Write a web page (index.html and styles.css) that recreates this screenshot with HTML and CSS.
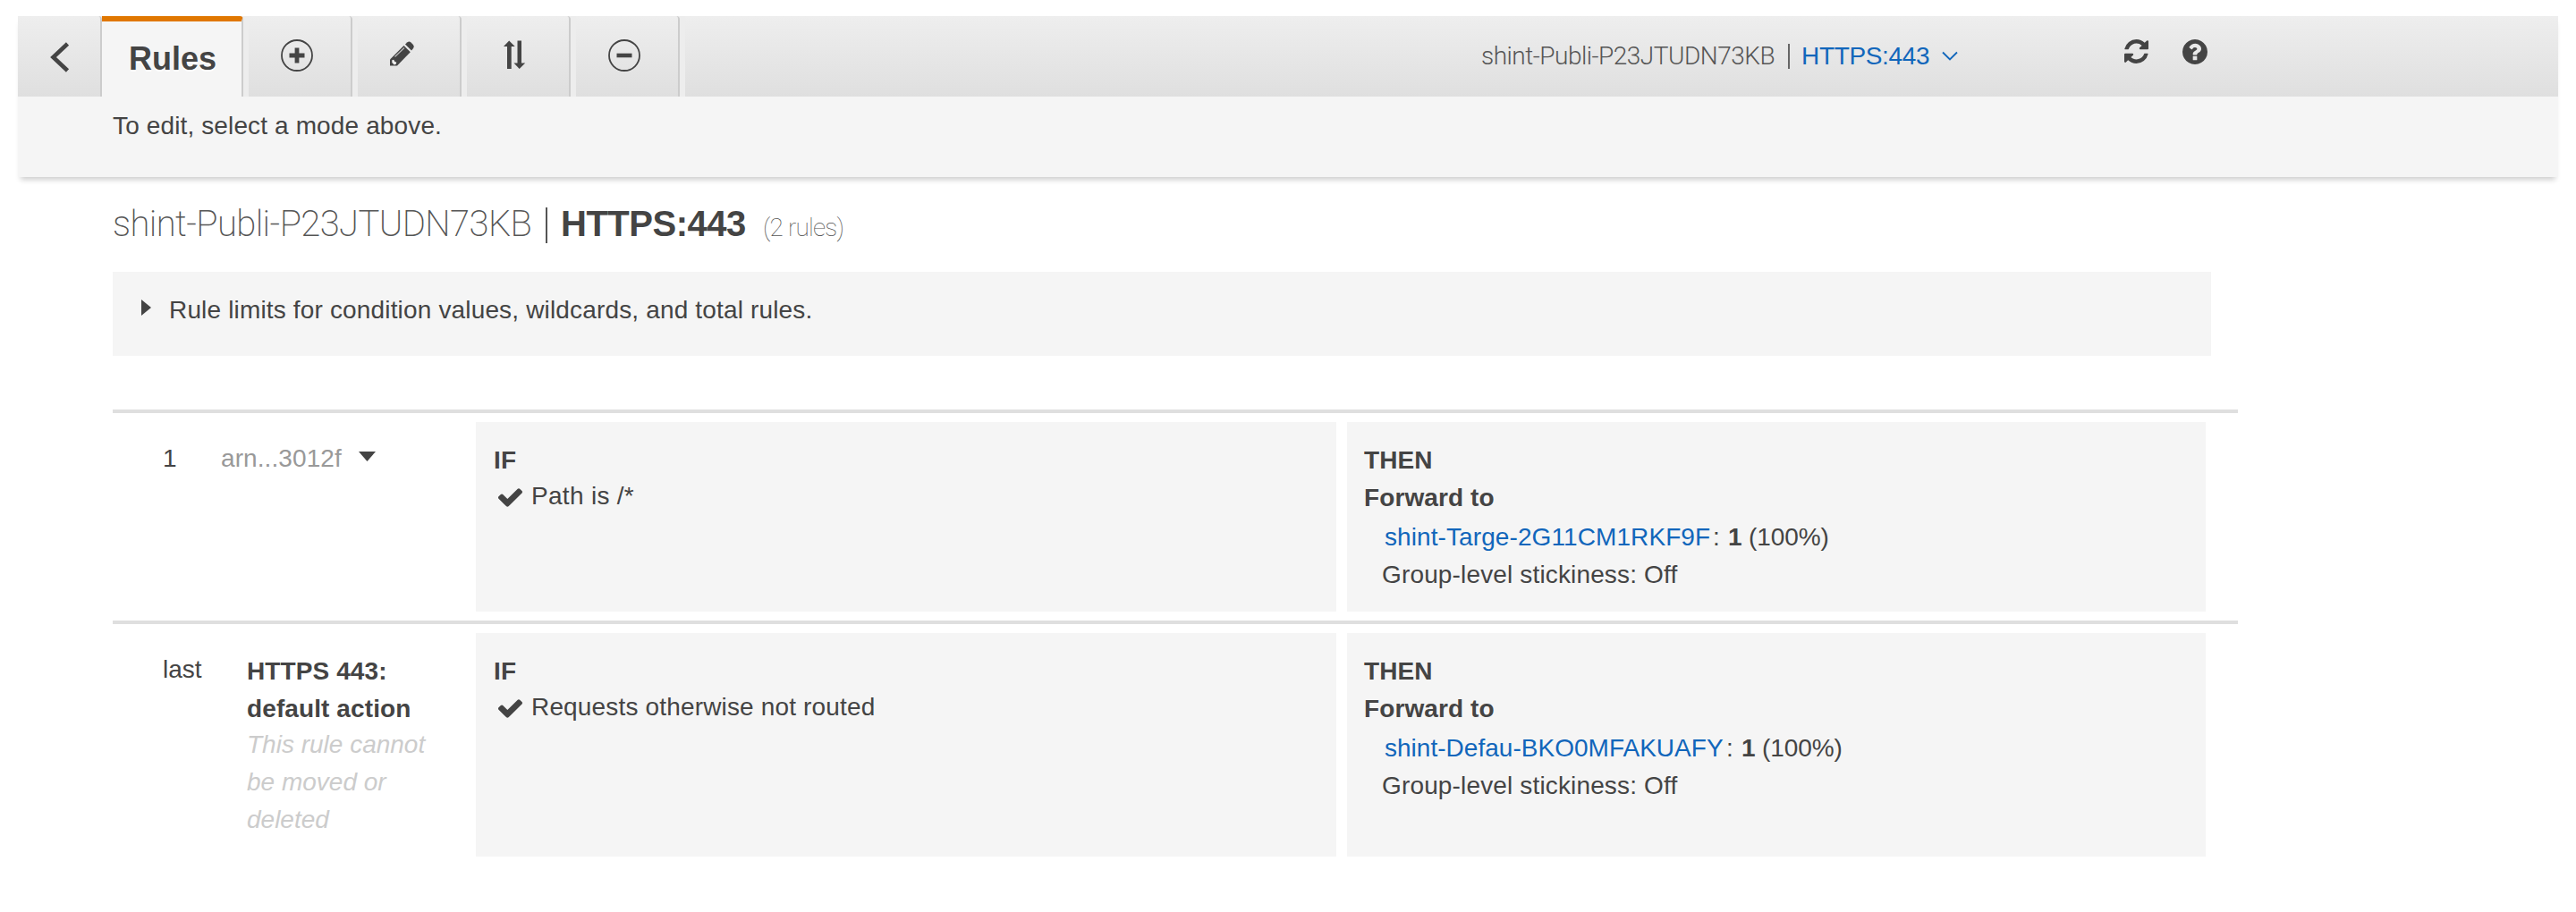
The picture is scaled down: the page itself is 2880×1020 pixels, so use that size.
FILE: index.html
```html
<!DOCTYPE html>
<html lang="en">
<head>
<meta charset="utf-8">
<title>Listener rules</title>
<link rel="stylesheet" href="styles.css">
</head>
<body>
<header class="header">
  <nav class="toolbar">
    <a class="tab tab-back"><svg width="24" height="36" viewBox="0 0 24 36"><path d="M20.5 3 4.5 18l16 15" fill="none" stroke="#444" stroke-width="4.6"/></svg></a>
    <a class="tab tab-active">Rules</a>
    <a class="tab tab-icon"><svg width="36" height="36" viewBox="0 0 36 36"><circle cx="18" cy="18" r="17" fill="none" stroke="#444" stroke-width="1.8"/><path d="M18 9.500v17M9.500 18h17" stroke="#444" stroke-width="4.800"/></svg></a>
    <a class="tab tab-icon"><svg width="36" height="36" viewBox="0 0 36 36"><path d="M4 29.500v-7L19.500 7l7.300 7.300L12 29.500z" fill="#444"/><path d="M21 5.500 23.500 3.300q2-1.500 4 .3l2.400 2.400q1.800 2 .2 4L28 12.500z" fill="#444"/><path d="M9.500 19.500 20 9.500" stroke="#bbb" stroke-width="1.100"/><path d="M6.300 23.300l1.900-.6 1 2.100 2.100.9-.6 2-2 .7-2.400-2.300z" fill="#eee"/></svg></a>
    <a class="tab tab-icon"><svg width="36" height="36" viewBox="0 0 36 36"><path d="M11.200 1.500 17.700 8h-4v25H9V8H5z" fill="#444"/><path d="M22.700 33 16.500 26.500h4v-25H25v25h4.200z" fill="#444"/></svg></a>
    <a class="tab tab-icon"><svg width="36" height="36" viewBox="0 0 36 36"><circle cx="18" cy="18" r="17" fill="none" stroke="#444" stroke-width="1.800"/><path d="M9.500 18h17" stroke="#444" stroke-width="4.600"/></svg></a>
    <div class="crumb">
      <span class="light">shint-Publi-P23JTUDN73KB</span>
      <span class="bar"></span>
      <a class="link crumb-link">HTTPS:443</a>
      <svg class="caret" width="18" height="12" viewBox="0 0 18 12"><path d="M1 1.500 9 9.500l8-8" fill="none" stroke="#1166bb" stroke-width="1.800"/></svg>
    </div>
    <svg class="refresh" width="27" height="27" viewBox="0 0 1536 1536"><path fill="#444" d="M1511 928q0 5-1 7-64 268-268 434.500t-478 166.500q-146 0-282.500-55t-243.500-157l-129 129q-19 19-45 19t-45-19-19-45v-448q0-26 19-45t45-19h448q26 0 45 19t19 45-19 45l-137 137q71 66 161 102t187 36q134 0 250-65t186-179q11-17 53-117 8-23 30-23h192q13 0 22.500 9.500t9.500 22.500zm25-800v448q0 26-19 45t-45 19h-448q-26 0-45-19t-19-45 19-45l138-138q-148-137-349-137-134 0-250 65t-186 179q-11 17-53 117-8 23-30 23h-199q-13 0-22.500-9.500t-9.500-22.500v-7q65-268 270-434.500t480-166.500q146 0 284 55.500t245 156.500l130-129q19-19 45-19t45 19 19 45z"/></svg>
    <svg class="help" width="28" height="28" viewBox="0 0 1536 1536"><path fill="#444" d="M896 1248v-192q0-14-9-23t-23-9h-192q-14 0-23 9t-9 23v192q0 14 9 23t23 9h192q14 0 23-9t9-23zm256-672q0-88-55.500-163t-138.500-116-170-41q-243 0-371 213-15 24 8 42l132 100q7 6 19 6 16 0 25-12 53-68 86-92 34-24 86-24 48 0 85.500 26t37.500 59q0 38-20 61t-68 45q-63 28-115.500 86.500t-52.500 125.500v36q0 14 9 23t23 9h192q14 0 23-9t9-23q0-19 21.500-49.500t54.500-49.500q32-18 49-28.500t46-35 44.500-48 28-60.500 12.500-81zm384 192q0 209-103 385.500t-279.500 279.500-385.500 103-385.500-103-279.500-279.500-103-385.500 103-385.500 279.500-279.500 385.500-103 385.500 103 279.500 279.500 103 385.500z"/></svg>
  </nav>
  <p class="hint">To edit, select a mode above.</p>
</header>
<main class="main">
  <h1 class="title">
    <span class="title-name">shint-Publi-P23JTUDN73KB</span>
    <span class="title-bar"></span>
    <span class="title-port">HTTPS:443</span>
    <span class="title-count">(2 rules)</span>
  </h1>
  <section class="limits">
    <svg width="11" height="18" viewBox="0 0 11 18"><path d="M0 0 11 9 0 18z" fill="#444"/></svg>
    <span class="wide">Rule limits for condition values, wildcards, and total rules.</span>
  </section>
  <section class="rule">
    <div class="num num-first">1</div>
    <div class="arn">
      <span>arn...3012f</span>
      <svg width="19" height="11" viewBox="0 0 19 11"><path d="M0 0h19L9.500 11z" fill="#444"/></svg>
    </div>
    <div class="cell cell-if">
      <strong class="line">IF</strong>
      <div class="cond"><svg width="27" height="21" viewBox="121 334 1550 1188"><path fill="#444" d="M1671 566q0 40-28 68l-724 724-136 136q-28 28-68 28t-68-28l-136-136-362-362q-28-28-28-68t28-68l136-136q28-28 68-28t68 28l294 295 656-657q28-28 68-28t68 28l136 136q28 28 28 68z"/></svg><span class="path">Path is /*</span></div>
    </div>
    <div class="cell cell-then">
      <strong class="line">THEN</strong>
      <strong class="line">Forward to</strong>
      <div class="target"><a class="link">shint-Targe-2G11CM1RKF9F</a><span class="colon">:</span><b>1</b><span class="pct">(100%)</span></div>
      <div class="sticky">Group-level stickiness: Off</div>
    </div>
  </section>
  <section class="rule rule-last">
    <div class="num">last</div>
    <div class="default">
      <strong class="line">HTTPS 443:<br>default action</strong>
      <em class="note">This rule cannot<br>be moved or<br>deleted</em>
    </div>
    <div class="cell cell-if">
      <strong class="line">IF</strong>
      <div class="cond"><svg width="27" height="21" viewBox="121 334 1550 1188"><path fill="#444" d="M1671 566q0 40-28 68l-724 724-136 136q-28 28-68 28t-68-28l-136-136-362-362q-28-28-28-68t28-68l136-136q28-28 68-28t68 28l294 295 656-657q28-28 68-28t68 28l136 136q28 28 28 68z"/></svg><span class="wide">Requests otherwise not routed</span></div>
    </div>
    <div class="cell cell-then">
      <strong class="line">THEN</strong>
      <strong class="line">Forward to</strong>
      <div class="target"><a class="link link-default">shint-Defau-BKO0MFAKUAFY</a><span class="colon">:</span><b>1</b><span class="pct">(100%)</span></div>
      <div class="sticky">Group-level stickiness: Off</div>
    </div>
  </section>
</main>
</body>
</html>
```
FILE: styles.css
```css
* { box-sizing: border-box; }
body {
  margin: 0;
  padding: 18px 20px 0;
  background: #fff;
  color: #444;
  font: 28px/42px "Liberation Sans", Arial, sans-serif;
}
svg { display: block; flex: none; }
.link { color: #1166bb; letter-spacing: 0.09px; }
.wide { letter-spacing: 0.16px; }

/* Header */
.header {
  height: 180px;
  background: #f5f5f5;
  box-shadow: 0 6px 6px -3px rgba(0, 0, 0, 0.2);
}
.toolbar {
  display: flex;
  height: 90px;
  background: linear-gradient(#eee, #dfdfdf);
}
.tab {
  display: flex;
  flex: none;
  border-right: 2px solid #ccc;
  border-top-right-radius: 4px;
}
.tab-back { width: 94px; padding: 28px 0 0 35px; }
.tab-active {
  width: 158px;
  padding: 21px 0 0 30px;
  border-top: 6px solid #e07700;
  background: #f5f5f5;
  font-size: 36px;
  font-weight: bold;
  text-shadow: 0 2px 0 #fff;
}
.tab-icon {
  width: 122px;
  padding: 26px 0 0 36px;
  border-left: 6px solid #ededed;
}
.tab-icon:nth-child(4) { padding-left: 32px; }
.crumb {
  display: flex;
  flex: 1;
  padding: 24px 0 0 890px;
  border-left: 6px solid #ededed;
  white-space: nowrap;
}
.light {
  width: 343px;
  flex: none;
  color: #555;
  font-family: Roboto, sans-serif;
  font-weight: 300;
  letter-spacing: -0.5px;
}
.bar { width: 2px; height: 28px; margin-top: 7px; background: #666; }
.crumb-link { width: 156px; margin: 0 0 0 13px; letter-spacing: -0.34px; }
.caret { margin: 15px 0 0 1px; }
.refresh { margin: 26px 0 0; }
.help { margin: 26px 392px 0 38px; }
.hint { margin: 0; padding: 12px 0 0 106px; letter-spacing: 0.13px; }

/* Page body */
.main { width: 2482px; padding-left: 106px; }
.title {
  display: flex;
  height: 106px;
  margin: 0;
  padding-top: 31px;
  font-size: 40px;
  font-weight: normal;
  white-space: nowrap;
}
.title-name {
  width: 484px;
  flex: none;
  padding-top: 1px;
  color: #555;
  font-family: Roboto, sans-serif;
  font-weight: 200;
  letter-spacing: -0.6px;
}
.title-bar { width: 2px; height: 40px; margin-top: 3px; background: #555; }
.title-port { width: 241px; padding-left: 15px; font-weight: bold; letter-spacing: -0.49px; }
.title-count {
  padding-top: 5px;
  color: #555;
  font-family: Roboto, sans-serif;
  font-size: 28px;
  font-weight: 250;
  letter-spacing: -0.8px;
}
.limits {
  display: flex;
  gap: 20px;
  width: 2346px;
  height: 94px;
  margin-bottom: 60px;
  padding: 22px 0 0 32px;
  background: #f5f5f5;
}
.limits svg { margin-top: 9px; }

/* Rule rows */
.rule {
  display: flex;
  width: 2376px;
  height: 236px;
  padding: 10px 0;
  border-top: 4px solid #dfdfdf;
}
.rule-last { height: 274px; }
.num { width: 150px; padding: 20px 0 0 56px; }
.num-first { width: 121px; }
.arn { display: flex; gap: 19px; width: 285px; padding-top: 20px; color: #999; letter-spacing: 0.09px; }
.arn svg { margin-top: 13px; }
.default { width: 256px; padding-top: 22px; }
.line { display: block; letter-spacing: 0.1px; }
.note { display: block; margin-top: -2px; color: #ccc; }
.cell { padding-top: 22px; background: #f5f5f5; }
.cell-if { width: 962px; margin-right: 12px; padding-left: 20px; }
.cell-then { width: 960px; padding-left: 19px; }
.cond { display: flex; gap: 10px; margin-top: -2px; padding-left: 5px; }
.cond svg { margin-top: 12px; }
.path { letter-spacing: 0.3px; }
.target { display: flex; margin-top: 2px; padding-left: 23px; }
.target .link { width: 367px; }
.target .link-default { width: 382px; letter-spacing: 0.02px; }
.colon { width: 17px; }
.target b { width: 23px; }
.pct { letter-spacing: -0.1px; }
.sticky { padding-left: 20px; letter-spacing: 0.15px; }
```
